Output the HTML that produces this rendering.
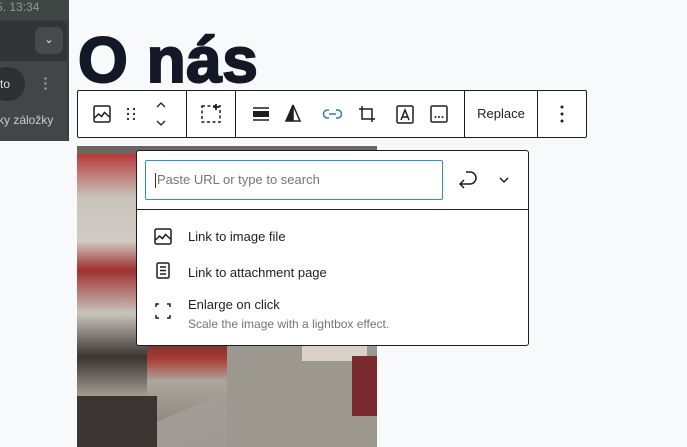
<!DOCTYPE html>
<html><head><meta charset="utf-8"><style>
*{box-sizing:border-box;margin:0;padding:0}
body{width:687px;height:447px;overflow:hidden;background:#f8f9fb;font-family:"Liberation Sans",sans-serif;position:relative}
.abs{position:absolute}
</style></head><body>
<div class="abs" style="left:0;top:0;width:69px;height:141px;background:#3b3d3c"></div>
<div class="abs" style="left:0;top:0;width:69px;height:20px;background:#3f4744;color:#8f9894;font-size:12px;line-height:14px">
<span style="position:absolute;left:-4px;top:0">5.&nbsp;13:34</span></div>
<div class="abs" style="left:0;top:21px;width:67px;height:120px;background:#333435;border-radius:0 8px 0 0"></div>
<div class="abs" style="left:35px;top:27px;width:28px;height:27px;background:#48494a;border-radius:7px;color:#eee;font-size:11px;text-align:center;line-height:27px">⌄</div>
<div class="abs" style="left:0;top:61px;width:67px;height:80px;background:#444546"></div>
<div class="abs" style="left:-10px;top:67px;width:35px;height:34px;background:#2f3031;border-radius:17px;color:#ddd;font-size:12px;line-height:34px;padding-left:10px">to</div>
<div class="abs" style="left:44px;top:76px;width:3px;height:14px;background:radial-gradient(circle,#999 1px,transparent 1.5px) 0 0/3px 5px"></div>
<div class="abs" style="left:-2px;top:113px;color:#ccc;font-size:12px">ky záložky</div>

<div class="abs" style="left:78px;top:20px;font-size:64px;font-weight:bold;color:#121826;letter-spacing:0.5px;line-height:80px;-webkit-text-stroke:2px #121826">O nás</div>

<div class="abs" style="left:77px;top:146px;width:300px;height:301px;overflow:hidden;background:linear-gradient(160deg,#8a8682 0%,#a8a39c 50%,#9b968f 100%)">
<div class="abs" style="left:0;top:0;width:300px;height:8px;background:#6e6560"></div>
<div class="abs" style="left:0;top:8px;width:70px;height:290px;background:linear-gradient(#b83a3a 0,#c9c4bc 15%,#d0cbc4 30%,#9e3030 40%,#c8c4bd 55%,#3a3330 70%,#b0a79c 85%,#2c2826 100%)"></div>
<div class="abs" style="left:70px;top:130px;width:180px;height:150px;background:linear-gradient(#d6d0c8 0,#cbc2b4 20%,#3a302b 35%,#a93a33 55%,#ada69c 70%,#8d8780 100%);clip-path:polygon(0 0,100% 40%,100% 50%,0 100%)"></div>
<div class="abs" style="left:150px;top:200px;width:150px;height:101px;background:#9c978f"></div>
<div class="abs" style="left:225px;top:200px;width:65px;height:15px;background:#d9d2c6"></div>
<div class="abs" style="left:275px;top:210px;width:25px;height:60px;background:#7a2a2e"></div>
<div class="abs" style="left:0;top:250px;width:80px;height:51px;background:#3a3532"></div>
</div>

<div class="abs" style="left:77px;top:90px;width:510px;height:48px;background:#fff;border:1px solid #1e1e1e;border-radius:2px"></div>
<div class="abs" style="left:186px;top:91px;width:1px;height:46px;background:#1e1e1e"></div>
<div class="abs" style="left:235px;top:91px;width:1px;height:46px;background:#1e1e1e"></div>
<div class="abs" style="left:464px;top:91px;width:1px;height:46px;background:#1e1e1e"></div>
<div class="abs" style="left:537px;top:91px;width:1px;height:46px;background:#1e1e1e"></div>
<svg class="abs" style="left:77px;top:90px" width="510" height="48" fill="none" stroke="#1e1e1e" stroke-width="1.5">
<rect x="17" y="16" width="16" height="16" rx="1.5"/><path d="M17.5 28l4-4 3 2.5 3-4 5 4.5"/>
<g fill="#1e1e1e" stroke="none"><circle cx="51" cy="19" r="1.1"/><circle cx="57" cy="19" r="1.1"/><circle cx="51" cy="24" r="1.1"/><circle cx="57" cy="24" r="1.1"/><circle cx="51" cy="29" r="1.1"/><circle cx="57" cy="29" r="1.1"/></g>
<path d="M80 17l4-4 4 4M80 31l4 4 4-4" stroke-width="1.3"/>
<rect x="125" y="16" width="18" height="16" stroke-dasharray="3 2.5"/><path d="M139 14v6M136 17h6" stroke-width="1.8"/>
<path d="M176 18h16M176 30h16"/><rect x="176" y="21" width="16" height="6" fill="#1e1e1e" stroke="none"/>
<path d="M216 15l-7 16h7z" fill="#1e1e1e"/><path d="M216 15l7 16h-7"/>
<path d="M252 20h-1.5a4 4 0 000 8h1.5M259 20h1.5a4 4 0 010 8h-1.5M252 24h7" stroke="#2e79bf"/>
<path d="M285 16v13h13M282 19h13v13"/>
<rect x="320" y="16" width="16" height="17" rx="1.5"/><path d="M324 30l4-10 4 10M325.5 27h5"/>
<rect x="354" y="16" width="16" height="16" rx="1.5"/><g fill="#1e1e1e" stroke="none"><circle cx="358.5" cy="27" r="1"/><circle cx="362" cy="27" r="1"/><circle cx="365.5" cy="27" r="1"/></g>
<g fill="#1e1e1e" stroke="none"><circle cx="485" cy="17" r="1.5"/><circle cx="485" cy="24" r="1.5"/><circle cx="485" cy="31" r="1.5"/></g>
</svg>
<div class="abs" style="left:465px;top:91px;width:72px;height:46px;line-height:46px;text-align:center;font-size:13px;color:#1e1e1e">Replace</div>

<div class="abs" style="left:136px;top:150px;width:393px;height:196px;background:#fff;border:1px solid #1e1e1e;border-radius:3px"></div>
<div class="abs" style="left:145px;top:160px;width:298px;height:40px;border:1.5px solid #2e8dcb;border-radius:2px;font-size:13px;color:#757575;line-height:37px;padding-left:9px"><span style="display:inline-block;width:1px;height:15px;background:#333;vertical-align:middle;margin-right:1px"></span>Paste URL or type to search</div>
<div class="abs" style="left:137px;top:209px;width:391px;height:1px;background:#1e1e1e"></div>
<svg class="abs" style="left:450px;top:165px" width="70" height="30" fill="none" stroke="#1e1e1e" stroke-width="1.5">
<path d="M16 7h4a6 6 0 010 12h-10M14 15l-4 4 4 4"/>
<path d="M50 13l4 4 4-4"/>
</svg>
<svg class="abs" style="left:150px;top:225px" width="30" height="100" fill="none" stroke="#1e1e1e" stroke-width="1.5">
<rect x="5" y="4" width="16" height="15" rx="1.5"/><path d="M5.5 15l4-4 3 2.5 3-4 5 4.5"/>
<rect x="7" y="38" width="12" height="15" rx="1.5"/><path d="M10 42h6M10 45.5h6M10 49h6"/>
<path d="M6 82v-3h3M17 79h3v3M20 90v3h-3M9 93h-3v-3"/>
</svg>
<div class="abs" style="left:188px;top:229px;font-size:13px;color:#1e1e1e">Link to image file</div>
<div class="abs" style="left:188px;top:265px;font-size:13px;color:#1e1e1e">Link to attachment page</div>
<div class="abs" style="left:188px;top:297px;font-size:13px;color:#1e1e1e">Enlarge on click</div>
<div class="abs" style="left:188px;top:317px;font-size:12px;color:#757575">Scale the image with a lightbox effect.</div>
</body></html>
